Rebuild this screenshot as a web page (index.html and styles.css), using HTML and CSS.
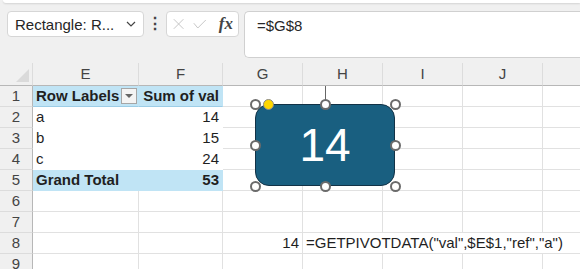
FILE: index.html
```html
<!DOCTYPE html>
<html lang="en">
<head>
    <meta charset="UTF-8">
    <title>Pivot sheet</title>
    <link rel="stylesheet" href="styles.css">
</head>
<body>
    <div class="ribbon-edge"></div>

    <!-- Name box + formula bar -->
    <div class="formula-row">
        <div class="name-box">
            <span>Rectangle: R...</span>
            <svg class="chev" width="10" height="6" viewBox="0 0 10 6"><path d="M1 1 L5 5 L9 1" fill="none" stroke="#444" stroke-width="1.2"/></svg>
        </div>
        <div class="kebab">&#8942;</div>
        <div class="fx-buttons">
            <svg width="14" height="14" viewBox="0 0 14 14"><path d="M1 1 L13 13 M13 1 L1 13" stroke="#c4c4c4" stroke-width="1.2"/></svg>
            <svg width="17" height="12" viewBox="0 0 17 12"><path d="M1 5 L6 11 L16 1" fill="none" stroke="#c4c4c4" stroke-width="1.2"/></svg>
            <span class="fx">fx</span>
        </div>
        <div class="formula-input">=$G$8</div>
    </div>

    <!-- Sheet -->
    <div class="sheet">
        <div class="grid">
            <div class="corner"><div class="corner-tri"></div></div>
            <div class="col-head">E</div>
            <div class="col-head">F</div>
            <div class="col-head">G</div>
            <div class="col-head">H</div>
            <div class="col-head">I</div>
            <div class="col-head">J</div>
            <div class="col-head last"></div>

            <div class="row-head">1</div>
            <div class="cell pv-head bold">Row Labels <span class="drop"><span class="tri"></span></span></div>
            <div class="cell pv-head bold num">Sum of val</div>
            <div class="cell"></div><div class="cell"></div><div class="cell"></div><div class="cell"></div><div class="cell last"></div>

            <div class="row-head">2</div>
            <div class="cell pv">a</div>
            <div class="cell pv num">14</div>
            <div class="cell"></div><div class="cell"></div><div class="cell"></div><div class="cell"></div><div class="cell last"></div>

            <div class="row-head">3</div>
            <div class="cell pv">b</div>
            <div class="cell pv num">15</div>
            <div class="cell"></div><div class="cell"></div><div class="cell"></div><div class="cell"></div><div class="cell last"></div>

            <div class="row-head">4</div>
            <div class="cell pv">c</div>
            <div class="cell pv num">24</div>
            <div class="cell"></div><div class="cell"></div><div class="cell"></div><div class="cell"></div><div class="cell last"></div>

            <div class="row-head">5</div>
            <div class="cell pv-total bold">Grand Total</div>
            <div class="cell pv-total bold num">53</div>
            <div class="cell"></div><div class="cell"></div><div class="cell"></div><div class="cell"></div><div class="cell last"></div>

            <div class="row-head">6</div>
            <div class="cell"></div><div class="cell"></div><div class="cell"></div><div class="cell"></div><div class="cell"></div><div class="cell"></div><div class="cell last"></div>

            <div class="row-head">7</div>
            <div class="cell"></div><div class="cell"></div><div class="cell"></div><div class="cell"></div><div class="cell"></div><div class="cell"></div><div class="cell last"></div>

            <div class="row-head">8</div>
            <div class="cell"></div><div class="cell"></div>
            <div class="cell num">14</div>
            <div class="cell overflow">=GETPIVOTDATA("val",$E$1,"ref","a")</div>
            <div class="cell no-line"></div><div class="cell no-line"></div><div class="cell last"></div>

            <div class="row-head">9</div>
            <div class="cell"></div><div class="cell"></div><div class="cell"></div><div class="cell"></div><div class="cell"></div><div class="cell"></div><div class="cell last"></div>
        </div>

        <!-- selected shape on top of the cells -->
        <div class="rot-line"></div>
        <div class="shape">14</div>
        <span class="handle" style="left:255px;top:41px"></span>
        <span class="handle" style="left:325px;top:41px"></span>
        <span class="handle" style="left:395px;top:41px"></span>
        <span class="handle" style="left:255px;top:82px"></span>
        <span class="handle" style="left:395px;top:82px"></span>
        <span class="handle" style="left:255px;top:123px"></span>
        <span class="handle" style="left:325px;top:123px"></span>
        <span class="handle" style="left:395px;top:123px"></span>
        <span class="handle yellow" style="left:268px;top:41px"></span>
    </div>
</body>
</html>
```

FILE: styles.css
```css
body {
    margin: 0;
    background-color: #f0f0f0;
    font-family: "Liberation Sans", Arial, sans-serif;
    color: #1f1f1f;
    width: 580px;
    height: 269px;
    overflow: hidden;
}

.ribbon-edge {
    height: 3px;
    margin-left: 3px;
    background-color: #fff;
    border-radius: 0 0 0 6px;
    box-shadow: 0 1px 2px rgba(0, 0, 0, 0.12);
}

/* formula bar row */
.formula-row {
    display: flex;
    align-items: flex-start;
    margin-top: 8px;
    height: 46px;
}

.name-box {
    display: flex;
    align-items: center;
    justify-content: space-between;
    box-sizing: border-box;
    margin-left: 7px;
    width: 137px;
    height: 26px;
    padding: 0 7px 0 7px;
    background-color: #fff;
    border: 1px solid #d6d6d6;
    border-radius: 4px;
    font-size: 15px;
    color: #262626;
}

.kebab {
    width: 22px;
    text-align: center;
    font-size: 16px;
    line-height: 26px;
    color: #444;
    font-weight: bold;
}

.fx-buttons {
    display: flex;
    align-items: center;
    gap: 9px;
    box-sizing: border-box;
    width: 73px;
    height: 26px;
    padding: 0 5px 0 6px;
    background-color: #fff;
    border: 1px solid #d6d6d6;
    border-radius: 4px;
}

.fx {
    font-family: "Liberation Serif", serif;
    font-style: italic;
    font-weight: bold;
    font-size: 17px;
    color: #444;
    margin-left: 3px;
}

.formula-input {
    flex: 1;
    box-sizing: border-box;
    margin-left: 5px;
    height: 47px;
    padding: 5px 0 0 12px;
    background-color: #fff;
    border: 1px solid #d0d0d0;
    border-right: none;
    border-radius: 5px 0 0 5px;
    font-size: 15px;
    color: #262626;
}

/* sheet */
.sheet {
    position: relative;
    margin-top: 6px;
}

.grid {
    display: grid;
    grid-template-columns: 33px 106px 84px 80px 80px 80px 80px 1fr;
    grid-template-rows: 23px repeat(9, 21px);
    background-color: #fff;
}

.corner, .col-head {
    background-color: #f0f0f0;
    border-bottom: 1px solid #b7b7b7;
    box-sizing: border-box;
}

.corner {
    position: relative;
    border-right: 1px solid #dcdcdc;
}

.corner-tri {
    position: absolute;
    right: 3px;
    bottom: 3px;
    width: 0;
    height: 0;
    border-left: 13px solid transparent;
    border-bottom: 13px solid #dadada;
}

.col-head {
    border-right: 1px solid #dcdcdc;
    text-align: center;
    font-size: 15px;
    line-height: 22px;
    color: #444;
}

.row-head {
    background-color: #f0f0f0;
    border-right: 1px solid #b7b7b7;
    border-bottom: 1px solid #dcdcdc;
    box-sizing: border-box;
    text-align: center;
    font-size: 15px;
    line-height: 20px;
    color: #444;
}

.cell {
    box-sizing: border-box;
    border-right: 1px solid #e1e1e1;
    border-bottom: 1px solid #e1e1e1;
    padding: 0 3px;
    font-size: 15px;
    line-height: 20px;
    white-space: nowrap;
}

.cell.last, .col-head.last {
    border-right: none;
}

.cell.num {
    text-align: right;
    padding-right: 3px;
}

.cell.bold {
    font-weight: bold;
}

.cell.overflow {
    overflow: visible;
    border-right: none;
    position: relative;
    z-index: 1;
}

.cell.no-line {
    border-right: none;
}

/* pivot table */
.pv {
    background-color: #fff;
    border-color: #fff;
}

.pv-head {
    display: flex;
    align-items: center;
    justify-content: space-between;
    padding-right: 1px;
    background-color: #c0e4f5;
    border-right-color: #c0e4f5;
    border-bottom-color: #9ccde6;
}

.pv-head.num {
    justify-content: flex-end;
    padding-right: 3px;
}

.pv-total {
    background-color: #c0e4f5;
    border-right-color: #c0e4f5;
    border-bottom-color: #c0e4f5;
}

.drop {
    display: inline-flex;
    align-items: center;
    justify-content: center;
    box-sizing: border-box;
    width: 16px;
    height: 16px;
    background-color: #f4f4f4;
    border: 1px solid #a6a6a6;
}

.tri {
    width: 0;
    height: 0;
    border-left: 4px solid transparent;
    border-right: 4px solid transparent;
    border-top: 4px solid #666;
}

/* shape overlay */
.shape {
    position: absolute;
    left: 255px;
    top: 41px;
    width: 140px;
    height: 82px;
    box-sizing: border-box;
    background-color: #195f80;
    border: 1px solid #123246;
    border-radius: 14px;
    color: #fff;
    font-size: 46px;
    display: flex;
    align-items: center;
    justify-content: center;
}

.rot-line {
    position: absolute;
    left: 325px;
    top: 23px;
    width: 1px;
    height: 14px;
    background-color: #666;
}

.handle {
    position: absolute;
    width: 11px;
    height: 11px;
    margin: -5px 0 0 -5px;
    box-sizing: border-box;
    border: 2px solid #6b6b6b;
    border-radius: 50%;
    background-color: #fff;
}

.handle.yellow {
    background-color: #ffd700;
    border: 1px solid #8a8a8a;
}
```
